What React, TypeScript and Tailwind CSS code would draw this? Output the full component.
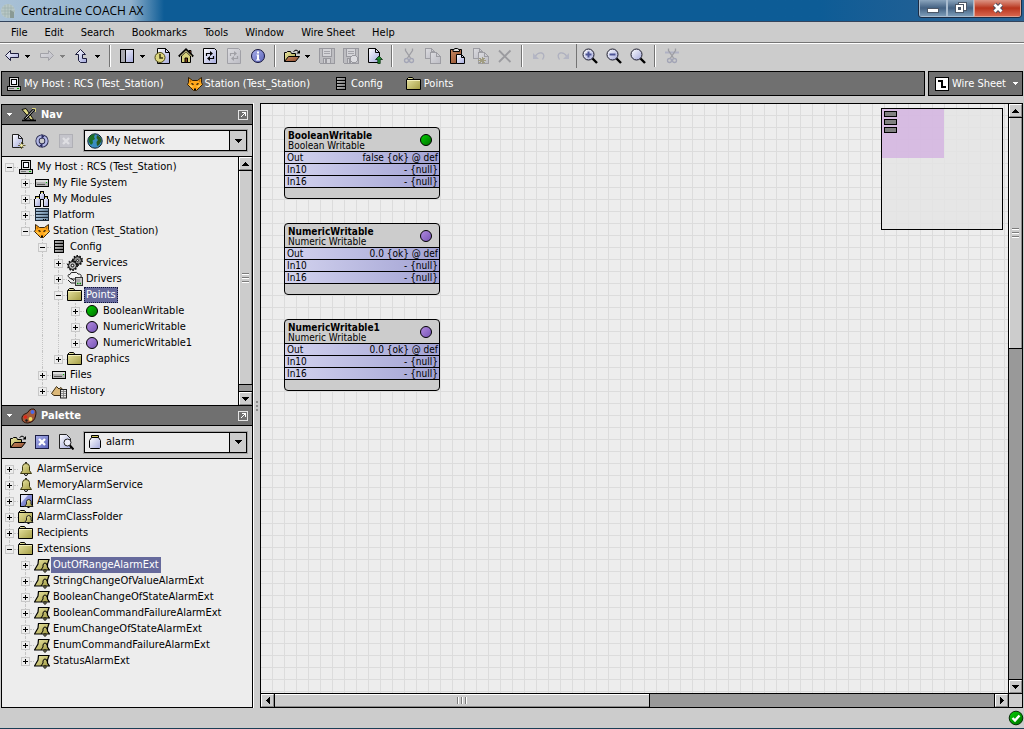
import { useState, type ReactNode } from "react";
import clsx from "clsx";

/* ---------- icons ---------- */

function Svg({ children, w = 16, h = 16, soft = false }: { children: ReactNode; w?: number; h?: number; soft?: boolean }) {
  return (
    <svg
      width={w}
      height={h}
      viewBox={`0 0 ${w} ${h}`}
      fill="none"
      shapeRendering={soft ? "auto" : "crispEdges"}
      className="block shrink-0"
      aria-hidden="true"
    >
      {children}
    </svg>
  );
}

function Gradients() {
  const list = [
    ["lav", "#ffffff", "#a4a9dc"],
    ["folder", "#ece8a8", "#a39c42"],
    ["wood", "#c98a62", "#8a4a2c"],
    ["rack", "#c4c4c4", "#6a6a6a"],
    ["blueSteel", "#c4dcf0", "#4d6b86"],
    ["off", "#dcdce0", "#bcbcc4"],
    ["blue", "#a9b0ea", "#5a62b8"],
    ["green", "#00d400", "#006c00"],
    ["purple", "#b38be0", "#7453b4"],
  ];
  return (
    <svg className="absolute size-0" aria-hidden="true">
      <defs>
        {list.map(([id, a, b]) => (
          <linearGradient key={id} id={id} x1="0" y1="0" x2="1" y2="1">
            <stop offset="0" stopColor={a} />
            <stop offset="1" stopColor={b} />
          </linearGradient>
        ))}
      </defs>
    </svg>
  );
}

const BackIcon = () => (
  <Svg soft>
    <path d="M1.500 7.500L6.500 2.500V5.500H14.500V9.500H6.500V12.500Z" fill="url(#lav)" stroke="#1c1c3c" />
  </Svg>
);
const ForwardIcon = () => (
  <Svg soft>
    <path d="M14.500 7.500L9.500 2.500V5.500H1.500V9.500H9.500V12.500Z" fill="url(#off)" stroke="#a2a2a8" />
  </Svg>
);
const UpIcon = () => (
  <Svg soft>
    <path d="M6.500 1.500L11.500 6.500H8.500V10.500H12.500V14.500H6.500L4.500 12.500V6.500H1.500Z" fill="url(#lav)" stroke="#1c1c3c" />
  </Svg>
);
const PanelIcon = () => (
  <Svg>
    <path d="M1.500 1.500H14.500V14.500H1.500Z" fill="url(#lav)" stroke="#000" />
    <path d="M2 2H6V14H2Z" fill="#a9a9b0" />
    <path d="M6.500 2V14" stroke="#000" />
  </Svg>
);
const HistoryClockIcon = () => (
  <Svg soft>
    <path d="M3.500 .5H11.500L15.500 4.500V15.500H3.500Z" fill="url(#lav)" stroke="#000" />
    <path d="M11.500 .5V4.500H15.500" stroke="#000" />
    <circle cx="6" cy="9.500" r="5" fill="#dcd680" stroke="#4c4716" />
    <path d="M6 6V10H9" stroke="#3c3810" strokeWidth="1.500" />
  </Svg>
);
const HomeIcon = () => (
  <Svg soft>
    <path d="M11 2.500H13V6H11Z" fill="#b05030" stroke="#000" />
    <path d="M3.500 8V14.500H12.500V8L8 3.500Z" fill="#d8d27c" stroke="#000" />
    <path d="M.8 8.500L8 1.500L15.200 8.500" stroke="#000" strokeWidth="2" />
    <path d="M2 8.500L8 2.800L14 8.500" stroke="#e4df98" strokeWidth=".9" />
    <path d="M7 10H9.500V14.500H7Z" fill="#7a3f1e" stroke="#000" />
  </Svg>
);
const RefreshIcon = ({ off = false }: { off?: boolean }) => {
  const ink = off ? "#a0a0a6" : "#000";
  return (
    <Svg soft>
      <path d="M1.500 .5H12.500L14.500 2.500V15.500H1.500Z" fill={off ? "url(#off)" : "url(#lav)"} stroke={ink} />
      <path d="M4.500 8V5.500H8.500M11.500 8V10.500H7.500" stroke={ink} strokeWidth="1.200" />
      <path d="M8 3L11 5.500L8 8ZM8 8L5 10.500L8 13Z" fill={ink} />
    </Svg>
  );
};
const InfoIcon = () => (
  <Svg soft>
    <circle cx="8" cy="8" r="6.500" fill="url(#blue)" stroke="#14143c" />
    <path d="M7 3.500H9V5.500H7ZM6.500 6.500H9V11.500H10V12.500H6V11.500H7V7.500H6.500Z" fill="#fff" />
  </Svg>
);
const OpenIcon = () => (
  <Svg w={17} soft>
    <path d="M.5 13.500V4.500H2.500L3.500 3.500H6.500L7.500 5.500H11.500V8" fill="url(#folder)" stroke="#000" />
    <path d="M.5 13.500L4.500 8.500H15.500L11.500 13.500Z" fill="url(#wood)" stroke="#000" />
    <path d="M9.500 3.500Q12 .5 14.500 3.500" stroke="#000" />
    <path d="M16 2V5.500H12.500Z" fill="#000" />
  </Svg>
);
const SaveIcon = ({ mark = false }: { mark?: boolean }) => (
  <Svg>
    <path d="M.5 .5H15.500V15.500H1.500L.5 14.500Z" fill="#bdbdc1" stroke="#99999f" />
    <path d="M3.500 1V8.500H12.500V1" fill="#d4d4d8" stroke="#99999f" />
    <path d="M5 3.500H11M5 5.500H11" stroke="#a4a4aa" />
    <path d="M4.500 15V10.500H11.500V15" fill="#d0d0d4" stroke="#99999f" />
    <path d="M6 11H8V15H6Z" fill="#99999f" />
    {mark && <circle cx="11" cy="11" r="3.500" fill="#dcdce0" stroke="#99999f" />}
  </Svg>
);
const ExportIcon = () => (
  <Svg soft>
    <path d="M1.500 .5H8.500L12.500 4.500V14.500H1.500Z" fill="url(#lav)" stroke="#000" />
    <path d="M8.500 .5V4.500H12.500" stroke="#000" />
    <path d="M12 8L15.500 11.500H13.200V15.500H10.800V11.500H8.500Z" fill="#1c8a2c" stroke="#062c0c" strokeWidth=".8" />
  </Svg>
);
const CutIcon = ({ bar = false }: { bar?: boolean }) => (
  <Svg soft>
    {bar && <path d="M1 4.500H15" stroke="#b0b2c4" strokeWidth="2" />}
    <path d="M4.500 .5V2.500L9.500 10M11.500 .5V2.500L6.500 10" stroke="#9d9da3" strokeWidth="1.300" />
    <circle cx="5.500" cy="12.500" r="2" stroke="#a3a5b6" strokeWidth="1.300" />
    <circle cx="10.500" cy="12.500" r="2" stroke="#a3a5b6" strokeWidth="1.300" />
  </Svg>
);
const CopyIcon = ({ mark = false }: { mark?: boolean }) => (
  <Svg>
    <path d="M.5 .5H6.500L9.500 3.500V10.500H.5Z" fill="url(#off)" stroke="#9d9da3" />
    <path d="M6.500 .5V3.500H9.500" stroke="#9d9da3" />
    <path d="M5.500 4.500H11.500L15.500 8.500V15.500H5.500Z" fill="url(#off)" stroke="#9d9da3" />
    <path d="M11.500 4.500V8.500H15.500" stroke="#9d9da3" />
    {mark && <path d="M5 12.500H13M9 8.500V16M6.500 10L11.500 15M11.500 10L6.500 15" stroke="#a09c80" />}
  </Svg>
);
const PasteIcon = () => (
  <Svg soft>
    <path d="M1.500 1.500H12.500V15.500H1.500Z" fill="url(#wood)" stroke="#000" />
    <path d="M4 3.500H10.500V2L8.500 .5H6L4 2Z" fill="#dedede" stroke="#000" />
    <path d="M7.500 6.500H12.500L15.500 9.500V15.500H7.500Z" fill="url(#lav)" stroke="#000" />
    <path d="M12.500 6.500V9.500H15.500" stroke="#000" />
  </Svg>
);
const DeleteIcon = () => (
  <Svg soft>
    <path d="M2 2.500L13.500 14M13.500 2.500L2 14" stroke="#9b9b9f" strokeWidth="1.800" />
  </Svg>
);
const UndoIcon = ({ redo = false }: { redo?: boolean }) => (
  <Svg soft>
    <g transform={redo ? "matrix(-1 0 0 1 16 0)" : undefined}>
      <path d="M4 8.500Q7 4 11 5Q14.500 7 11.500 11.500" stroke="#aeb0bf" strokeWidth="1.300" />
      <path d="M2 5V11H8Z" fill="#b4b6c4" />
    </g>
  </Svg>
);
const ZoomIcon = ({ sign }: { sign?: "+" | "-" }) => (
  <Svg soft>
    <path d="M10 10L15 15" stroke="#000" strokeWidth="2.400" />
    <circle cx="6.500" cy="6.500" r="5.500" fill="url(#lav)" stroke="#1c1c2c" />
    {sign && <path d="M3.500 6.500H9.500" stroke="#4c5496" strokeWidth="2" />}
    {sign === "+" && <path d="M6.500 3.500V9.500" stroke="#4c5496" strokeWidth="2" />}
  </Svg>
);

const HostIcon = () => (
  <Svg>
    <path d="M3.500 1.500H12.500V10.500H3.500Z" fill="#e0e0e0" stroke="#000" />
    <path d="M5.500 3.500H10.500V8.500H5.500Z" fill="#f4f6ff" stroke="#000" />
    <path d="M1.500 10.500H14.500V14.500H1.500Z" fill="#c8c8c8" stroke="#000" />
    <path d="M3 12.500H8" stroke="#777" />
    <path d="M11 12H13V13H11Z" fill="#00b400" />
  </Svg>
);
const FoxIcon = () => (
  <Svg soft>
    <path
      d="M1.500 1.500L5.500 4.500H10.500L14.500 1.500V6.500L15.500 8.500L12.500 11.500L9.500 14.500H6.500L3.500 11.500L.5 8.500L1.500 6.500Z"
      fill="#ffa81c"
      stroke="#241400"
      strokeWidth=".9"
    />
    <path d="M2.500 3.500L4.500 5L3 6.500ZM13.500 3.500L11.500 5L13 6.500Z" fill="#c87000" />
    <path d="M4.500 7.500L6.500 8.500M11.500 7.500L9.500 8.500" stroke="#000" strokeWidth="1.200" />
    <path d="M2.500 9.500L5.500 10.500M13.500 9.500L10.500 10.500" stroke="#ffe070" />
    <path d="M7 12.500H9V14H7Z" fill="#000" />
  </Svg>
);
const RackIcon = ({ blue = false }: { blue?: boolean }) => (
  <Svg>
    {[1, 4, 7, 10].map((y) => (
      <rect
        key={y}
        x={blue ? 1.5 : 3.5}
        y={y + 0.5}
        width={blue ? 13 : 9}
        height="3"
        fill={blue ? "url(#blueSteel)" : "url(#rack)"}
        stroke={blue ? "#1c2a38" : "#000"}
      />
    ))}
    {blue && <path d="M9 12.500H10M11 12.500H12" stroke="#000" />}
  </Svg>
);
const FolderIcon = () => (
  <Svg soft>
    <path d="M.5 13.500V3.500L2.500 1.500H6.500L8 3.500H14.500V13.500Z" fill="url(#folder)" stroke="#000" />
    <path d="M1 4.500H14" stroke="#f4f0bc" />
    <path d="M1 3.500H8" stroke="#000" />
  </Svg>
);
const WireSheetIcon = () => (
  <Svg>
    <path d="M1.500 1.500H14.500V14.500H1.500Z" fill="#fff" stroke="#000" />
    <path d="M4 5H8V11H12" stroke="#000" strokeWidth="2" />
  </Svg>
);
const NavIcon = () => (
  <Svg soft>
    <path d="M1 2.500L5 1.500L12.500 12.500L10 13Z" fill="#e0da86" stroke="#000" strokeWidth=".9" />
    <path d="M13.500 2L3.500 12.500" stroke="#000" strokeWidth="2.600" />
    <path d="M13 2.500L4.500 11.500" stroke="#dadada" />
    <path d="M1 13.500H15" stroke="#000" strokeWidth="1.600" />
    <path d="M11 1.500H14.500V5" stroke="#d9d27a" />
  </Svg>
);
const DetachIcon = () => (
  <Svg w={12} h={12}>
    <path d="M1.500 1.500H10.500V10.500H1.500Z" stroke="#e4e4e4" />
    <path d="M3.500 8.500L8 4M5 3.500H8.500V7" stroke="#fff" />
  </Svg>
);
const NewDocIcon = () => (
  <Svg soft>
    <path d="M2.500 1.500H8.500L12.500 5.500V14.500H2.500Z" fill="url(#lav)" stroke="#222" />
    <path d="M8.500 1.500V5.500H12.500" stroke="#222" />
    <path d="M8 12.500H15.500M11.500 9V16M9.500 10.500L13.500 14.500M13.500 10.500L9.500 14.500" stroke="#5c5620" strokeWidth=".9" />
    <circle cx="11.500" cy="12.500" r="1.400" fill="#f4efb0" />
  </Svg>
);
const SyncRingIcon = () => (
  <Svg soft>
    <circle cx="8" cy="8" r="4.500" stroke="#2a2c50" strokeWidth="4.200" />
    <circle cx="8" cy="8" r="4.500" stroke="#b3b8e6" strokeWidth="2.400" />
    <path d="M7.500 1L10.500 3.500L7.500 6ZM8.500 15L5.500 12.500L8.500 10Z" fill="#2a2c60" />
  </Svg>
);
const CloseBoxIcon = ({ off = false }: { off?: boolean }) => (
  <Svg>
    <rect x="1.500" y="1.500" width="13" height="13" fill={off ? "#c4c4cb" : "url(#blue)"} stroke={off ? "#b0b0b6" : "#1a1c44"} />
    <path d="M5 5L11 11M11 5L5 11" stroke={off ? "#dedee2" : "#fff"} strokeWidth="2.400" shapeRendering="auto" />
  </Svg>
);
const GlobeIcon = () => (
  <Svg soft>
    <circle cx="8" cy="8" r="7.200" fill="#3b8dc0" stroke="#0c2434" />
    <path d="M3 3Q6 .8 8 1.500L7 4L8 6L5.500 7.500L6 10L4 12L2 9L1.500 6Z" fill="#1d6e24" />
    <path d="M10 2L13.500 4.500L14.500 8L12 12L10 13L9.500 9L11 7L9.500 5Z" fill="#2a5a1c" />
  </Svg>
);
const DriveIcon = () => (
  <Svg>
    <rect x="1.500" y="4.500" width="13" height="7" fill="#b4b4b4" stroke="#000" />
    <path d="M2 5H14V7H2Z" fill="#dcdcdc" />
    <path d="M3 9.500H11" stroke="#555" />
    <path d="M12 7H13V8H12Z" fill="#00c000" />
  </Svg>
);
const ModulesIcon = () => (
  <Svg>
    <path d="M5.500 3.500L6.500 2.500V.5H9.500V2.500L10.500 3.500V8H5.500Z" fill="url(#lav)" stroke="#000" />
    <path d="M.5 8.500L1.500 7.500V5.500H5.500V7.500L6.500 8.500V15.500H.5Z" fill="url(#lav)" stroke="#000" />
    <path d="M9.500 8.500L10.500 7.500V5.500H13.500V7.500L14.500 8.500V15.500H9.500Z" fill="url(#lav)" stroke="#000" />
    <path d="M2 6.500H5M11 6.500H13M7 1.500H9" stroke="#cfc45a" />
  </Svg>
);
const GearsIcon = () => (
  <Svg soft>
    <circle cx="10.500" cy="5.500" r="4" fill="#8c8c8c" stroke="#000" />
    <circle cx="10.500" cy="5.500" r="4.800" stroke="#000" strokeWidth="1.400" strokeDasharray="1.500 1.500" />
    <circle cx="5.500" cy="10.500" r="4" fill="#b4b4b4" stroke="#000" />
    <circle cx="5.500" cy="10.500" r="4.800" stroke="#000" strokeWidth="1.400" strokeDasharray="1.500 1.500" />
    <circle cx="5.500" cy="10.500" r="1.300" fill="#fff" stroke="#000" />
    <circle cx="10.500" cy="5.500" r="1" fill="#ddd" stroke="#000" strokeWidth=".7" />
  </Svg>
);
const DriversIcon = () => (
  <Svg soft>
    <path d="M2 6.500Q-.5 3.500 3 3.500Q3.500 .5 7 1.500Q10 .5 11 3Q15 3 14 6L12 8H4Z" fill="#f4f4f4" stroke="#222" />
    <path d="M1 9L4 12H8M4 7L7 10" stroke="#222" />
    <rect x="8.500" y="6.500" width="7" height="8" fill="#c8c8c8" stroke="#333" />
    <path d="M10 8V11M12 8V11" stroke="#888" />
    <path d="M10 12.500H11.500M12.500 12.500H14" stroke="#0a8a0a" strokeWidth="1.500" />
  </Svg>
);
const HistoryIcon = () => (
  <Svg soft>
    <path d="M.5 10.500L5.500 3.500L8 6L10 4.500L14.500 10.500V12.500H3Z" fill="#dcb878" stroke="#3a2a10" />
    <rect x="9.500" y="6.500" width="6" height="8.500" fill="#e4e4e4" stroke="#222" />
    <path d="M10 8.500H15M10 10.500H15M10 12.500H15M12.500 7V15" stroke="#777" strokeWidth=".8" />
  </Svg>
);
const Dot = ({ color }: { color: "green" | "purple" }) => (
  <Svg w={14} h={14} soft>
    <circle cx="7" cy="7" r="5.500" fill={color === "green" ? "url(#green)" : "url(#purple)"} stroke="#000" />
  </Svg>
);
const PaletteIcon = () => (
  <Svg soft>
    <path d="M1 11Q.5 7 5 5.500Q7 5 8 2.500Q10 .5 13 1Q16 3 14.500 8Q13.500 14 7 15Q1.500 15 1 11Z" fill="#a2583a" stroke="#2a1208" />
    <circle cx="11.500" cy="4" r="2" fill="#4a6ae8" />
    <circle cx="4.500" cy="9" r="1.800" fill="#e02818" />
    <circle cx="9.500" cy="11" r="1.900" fill="#f0dc60" />
    <circle cx="5.500" cy="12.500" r="1.200" fill="#1a1a1a" />
  </Svg>
);
const PreviewIcon = () => (
  <Svg soft>
    <path d="M1.500 .5H8.500L12.500 4.500V14.500H1.500Z" fill="url(#lav)" stroke="#222" />
    <circle cx="9.500" cy="8.500" r="3.500" fill="#eeeefa" stroke="#222" />
    <path d="M12 11.500L15.500 15.500" stroke="#000" strokeWidth="2" />
  </Svg>
);
const JarIcon = () => (
  <Svg soft>
    <path d="M4.500 1.500H11.500V3.500H4.500Z" fill="#cfc45a" stroke="#000" />
    <path d="M4.500 3.500H11.500L13.500 6.500V13.500L12.500 14.500H3.500L2.500 13.500V6.500Z" fill="url(#lav)" stroke="#000" />
  </Svg>
);
const BellIcon = () => (
  <Svg soft>
    <circle cx="8" cy="13" r="1.500" fill="#fff" stroke="#000" />
    <path d="M8 2.500V1" stroke="#333" strokeWidth="2" />
    <path
      d="M2.500 12.500L4.500 9.500V5.500Q4.800 2.500 8 2.500Q11.200 2.500 11.500 5.500V9.500L13.500 12.500Z"
      fill="url(#folder)"
      stroke="#3c3810"
    />
  </Svg>
);
const AlarmClassIcon = () => (
  <Svg soft>
    <rect x="2.500" y="1.500" width="12" height="12" fill="url(#blue)" stroke="#000" />
    <path d="M3 2H10L3 10Z" fill="#dfe2fa" />
    <path d="M6.500 13.500L8.500 11V8.500Q9 6.500 10.500 6.500Q12.500 6.500 13 8.500V11L15 13.500Z" fill="url(#folder)" stroke="#222" />
    <path d="M9.500 14.500H11.500" stroke="#000" />
  </Svg>
);
const AlarmFolderIcon = () => (
  <Svg soft>
    <path d="M.5 13.500V3.500L2.500 1.500H6.500L8 3.500H14.500V13.500Z" fill="url(#folder)" stroke="#000" />
    <path d="M1 3.500H8" stroke="#000" />
    <path d="M6.500 13.500L8.500 11V8.500Q9 6.500 10.500 6.500Q12.500 6.500 13 8.500V11L15 13.500Z" fill="url(#folder)" stroke="#222" />
    <path d="M9.500 14.500H11.500" stroke="#000" />
  </Svg>
);
const AlarmExtIcon = () => (
  <Svg soft>
    <path d="M4.500 2.500H15L13.500 7V10L15.500 13H.5L4 7Z" fill="url(#folder)" stroke="#000" strokeWidth="1.200" />
    <path d="M7 13L9 10V8Q9.500 6 11 6Q13 6 13 8.500" stroke="#000" />
    <circle cx="11" cy="14" r="1.200" fill="#e6e19a" stroke="#000" />
  </Svg>
);
const OkIcon = () => (
  <Svg soft>
    <circle cx="8" cy="8" r="6.800" fill="url(#green)" stroke="#042c04" />
    <path d="M4.500 8L7 10.500L11.500 5.500" stroke="#fff" strokeWidth="2.400" />
  </Svg>
);
const AppIcon = () => (
  <Svg soft>
    <circle cx="8" cy="8" r="7" fill="#b9c8c6" />
    <path d="M2 5H14M1 8H15M2 11H14M5 2V14M8 1V15M11 2V14" stroke="#9fb1ae" strokeWidth=".8" />
    <path d="M10 7V15H14V9Z" fill="#8a9a94" />
  </Svg>
);

const Caret = ({ color = "#000" }: { color?: string }) => (
  <Svg w={5} h={3}>
    <path d="M0 0H5V1H4V2H3V3H2V2H1V1H0Z" fill={color} />
  </Svg>
);

const arrows = {
  up: "M3 0H4V1H5V2H6V3H7V4H0V3H1V2H2V1H3Z",
  down: "M0 0H7V1H6V2H5V3H4V4H3V3H2V2H1V1H0Z",
  left: "M3 0H4V7H3V6H2V5H1V4H0V3H1V2H2V1H3Z",
  right: "M0 0H1V1H2V2H3V3H4V4H3V5H2V6H1V7H0Z",
};
const Arrow = ({ dir }: { dir: keyof typeof arrows }) => {
  const flat = dir === "up" || dir === "down";
  return (
    <Svg w={flat ? 7 : 4} h={flat ? 4 : 7}>
      <path d={arrows[dir]} fill="#000" />
    </Svg>
  );
};

/* ---------- small controls ---------- */

const Sep = () => (
  <span className="flex h-[22px] w-2.5 shrink-0 justify-center">
    <span className="w-px bg-[#747474]" />
    <span className="w-px bg-white" />
  </span>
);

function Tool({ label, children, off }: { label: string; children: ReactNode; off?: boolean }) {
  return (
    <button type="button" aria-label={label} disabled={off} className="flex size-6 shrink-0 items-center justify-center">
      {children}
    </button>
  );
}

function CaretButton({ label, off }: { label: string; off?: boolean }) {
  return (
    <button type="button" aria-label={label} disabled={off} className="flex h-6 w-[11px] shrink-0 items-center pl-px">
      <Caret color={off ? "#808080" : "#000"} />
    </button>
  );
}

function ScrollButton({ dir }: { dir: keyof typeof arrows }) {
  return (
    <button
      type="button"
      aria-label={`Scroll ${dir}`}
      className="flex size-[13px] shrink-0 items-center justify-center border border-t-white border-r-[#8a8a8a] border-b-[#8a8a8a] border-l-white bg-[#cccccc]"
    >
      <Arrow dir={dir} />
    </button>
  );
}

function Grip({ vertical }: { vertical?: boolean }) {
  return (
    <span className={clsx("flex gap-0.5", vertical ? "flex-col" : "flex-row")}>
      {[0, 1, 2].map((i) => (
        <span
          key={i}
          className={clsx("border-[#7c7c7c] bg-white", vertical ? "h-0.5 w-[7px] border-t" : "h-[7px] w-0.5 border-l")}
        />
      ))}
    </span>
  );
}

function VScroll({ thumb }: { thumb: string }) {
  return (
    <div className="flex w-3.5 shrink-0 flex-col border-l border-black bg-[#999999]">
      <ScrollButton dir="up" />
      <div className="flex min-h-0 flex-1 flex-col border-y border-black">
        <div
          className="flex items-center justify-center border-r border-l border-l-white border-r-[#8a8a8a] bg-[#cccccc]"
          style={{ height: thumb }}
        >
          <Grip vertical />
        </div>
        <div className="h-px bg-black" />
      </div>
      <ScrollButton dir="down" />
    </div>
  );
}

function Combo({ label, icon, options }: { label: string; icon: ReactNode; options: string[] }) {
  return (
    <label className="flex h-[21px] flex-1 items-stretch border border-black bg-[#ededed] outline outline-[#a4a4a4]">
      <span className="flex items-center pl-0.5">{icon}</span>
      <select aria-label={label} className="min-w-0 flex-1 appearance-none bg-transparent pl-[3px] outline-none">
        {options.map((o) => (
          <option key={o}>{o}</option>
        ))}
      </select>
      <span className="flex w-[17px] items-center justify-center border-l border-black bg-[#cccccc]">
        <Arrow dir="down" />
      </span>
    </label>
  );
}

/* ---------- tree ---------- */

interface TreeRow {
  level: number;
  label: string;
  icon: ReactNode;
  open?: boolean;
  // levels whose dotted guide passes through this row
  guides?: number[];
  // whether the guide continues above / below the expander
  above?: boolean;
  below?: boolean;
}

const GUIDE_WIDTH = ["w-4", "w-[17px]", "w-4", "w-[17px]"];

const navRows: TreeRow[] = [
  { level: 0, label: "My Host : RCS (Test_Station)", icon: <HostIcon />, open: true },
  { level: 1, label: "My File System", icon: <DriveIcon />, above: true, below: true },
  { level: 1, label: "My Modules", icon: <ModulesIcon />, above: true, below: true },
  { level: 1, label: "Platform", icon: <RackIcon blue />, above: true, below: true },
  { level: 1, label: "Station (Test_Station)", icon: <FoxIcon />, open: true, above: true },
  { level: 2, label: "Config", icon: <RackIcon />, open: true, above: true, below: true },
  { level: 3, label: "Services", icon: <GearsIcon />, guides: [2], above: true, below: true },
  { level: 3, label: "Drivers", icon: <DriversIcon />, guides: [2], above: true, below: true },
  { level: 3, label: "Points", icon: <FolderIcon />, open: true, guides: [2], above: true, below: true },
  { level: 4, label: "BooleanWritable", icon: <Dot color="green" />, guides: [2, 3], above: true, below: true },
  { level: 4, label: "NumericWritable", icon: <Dot color="purple" />, guides: [2, 3], above: true, below: true },
  { level: 4, label: "NumericWritable1", icon: <Dot color="purple" />, guides: [2, 3], above: true },
  { level: 3, label: "Graphics", icon: <FolderIcon />, guides: [2], above: true },
  { level: 2, label: "Files", icon: <DriveIcon />, above: true, below: true },
  { level: 2, label: "History", icon: <HistoryIcon />, above: true },
];

const paletteRows: TreeRow[] = [
  { level: 0, label: "AlarmService", icon: <BellIcon />, below: true },
  { level: 0, label: "MemoryAlarmService", icon: <BellIcon />, above: true, below: true },
  { level: 0, label: "AlarmClass", icon: <AlarmClassIcon />, above: true, below: true },
  { level: 0, label: "AlarmClassFolder", icon: <AlarmFolderIcon />, above: true, below: true },
  { level: 0, label: "Recipients", icon: <FolderIcon />, above: true, below: true },
  { level: 0, label: "Extensions", icon: <FolderIcon />, open: true, above: true },
  { level: 1, label: "OutOfRangeAlarmExt", icon: <AlarmExtIcon />, above: true, below: true },
  { level: 1, label: "StringChangeOfValueAlarmExt", icon: <AlarmExtIcon />, above: true, below: true },
  { level: 1, label: "BooleanChangeOfStateAlarmExt", icon: <AlarmExtIcon />, above: true, below: true },
  { level: 1, label: "BooleanCommandFailureAlarmExt", icon: <AlarmExtIcon />, above: true, below: true },
  { level: 1, label: "EnumChangeOfStateAlarmExt", icon: <AlarmExtIcon />, above: true, below: true },
  { level: 1, label: "EnumCommandFailureAlarmExt", icon: <AlarmExtIcon />, above: true, below: true },
  { level: 1, label: "StatusAlarmExt", icon: <AlarmExtIcon />, above: true },
];

const Dotted = ({ show }: { show?: boolean }) => (
  <span className={clsx("w-0 flex-1 border-l border-dotted", show ? "border-[#c4c4c4]" : "border-transparent")} />
);

function Tree({ rows, initial, focused }: { rows: TreeRow[]; initial: string; focused?: boolean }) {
  const [selected, setSelected] = useState(initial);
  return (
    <ul className="min-w-0 flex-1 overflow-hidden pt-0.5 pl-[3px]">
      {rows.map((row) => (
        <li key={row.label} className="flex h-4">
          {GUIDE_WIDTH.slice(0, row.level).map((w, level) => (
            <span key={level} className={clsx("flex shrink-0 flex-col pl-1", w)}>
              <Dotted show={row.guides?.includes(level)} />
            </span>
          ))}
          <span className="flex w-[9px] shrink-0 flex-col items-center">
            <Dotted show={row.above} />
            <button type="button" aria-label={`${row.open ? "Collapse" : "Expand"} ${row.label}`} className="block size-[9px]">
              <Svg w={9} h={9}>
                <path d="M.5 .5H8.500V8.500H.5Z" fill="#ededed" stroke="#c8c8c8" />
                <path d={row.open ? "M2 4.500H7" : "M2 4.500H7M4.500 2V7"} stroke="#000" />
              </Svg>
            </button>
            <Dotted show={row.below} />
          </span>
          <span className="flex w-1 shrink-0 items-center">
            <span className="w-full border-t border-dotted border-[#c4c4c4]" />
          </span>
          <span className="flex w-4 shrink-0 items-center justify-center">{row.icon}</span>
          <button
            type="button"
            onClick={() => setSelected(row.label)}
            className={clsx(
              "ml-px border border-dotted px-px leading-[14px] whitespace-nowrap",
              selected === row.label ? "bg-[#666a9c] text-white" : "border-transparent",
              selected === row.label && (focused ? "border-[#10143c]" : "border-[#666a9c]"),
            )}
          >
            {row.label}
          </button>
        </li>
      ))}
    </ul>
  );
}

function PanelHeader({ icon, title }: { icon: ReactNode; title: string }) {
  return (
    <header className="flex h-5 shrink-0 items-center border-b border-black bg-[#707070] pr-[3px] pl-[5px] text-white">
      <button type="button" aria-label={`${title} menu`} className="mr-[9px]">
        <Caret color="#fff" />
      </button>
      {icon}
      <h2 className="ml-1 flex-1 font-bold">{title}</h2>
      <button type="button" aria-label={`Detach ${title}`}>
        <DetachIcon />
      </button>
    </header>
  );
}

/* ---------- wire sheet ---------- */

interface Block {
  name: string;
  type: string;
  color: "green" | "purple";
  out: string;
  place: string;
}

const blocks: Block[] = [
  { name: "BooleanWritable", type: "Boolean Writable", color: "green", out: "false {ok} @ def", place: "left-[23px] top-[23px]" },
  { name: "NumericWritable", type: "Numeric Writable", color: "purple", out: "0.0 {ok} @ def", place: "left-[23px] top-[119px]" },
  { name: "NumericWritable1", type: "Numeric Writable", color: "purple", out: "0.0 {ok} @ def", place: "left-[23px] top-[215px]" },
];

function WireBlock({ block }: { block: Block }) {
  const slots = [
    ["Out", block.out],
    ["In10", "- {null}"],
    ["In16", "- {null}"],
  ];
  return (
    <article
      className={clsx("absolute w-[156px] overflow-hidden rounded-[4px] border border-black bg-[#cccccc] text-[10px]", block.place)}
    >
      <div className="flex h-6 items-center justify-between border-b border-black pr-1.5 pl-[3px]">
        <div className="pt-0.5 leading-[10px]">
          <h3 className="font-bold">{block.name}</h3>
          <p>{block.type}</p>
        </div>
        <Dot color={block.color} />
      </div>
      <dl>
        {slots.map(([slot, value]) => (
          <div
            key={slot}
            className="flex h-3 justify-between border-b border-black bg-linear-to-r from-[#d3d3ee] to-[#a3a3d4] pr-px pl-0.5 leading-3"
          >
            <dt>{slot}</dt>
            <dd>{value}</dd>
          </div>
        ))}
      </dl>
      <div className="h-2.5" />
    </article>
  );
}

function Overview() {
  return (
    <div className="absolute top-1 right-[5px] size-[122px] border border-black bg-[#e4e4e4]/85">
      <div className="flex h-[49px] w-[62px] flex-col gap-0.5 bg-[#d3b4e0]/85 pt-0.5 pl-0.5">
        {blocks.map((b) => (
          <span key={b.name} className="h-1.5 w-[13px] border border-black bg-[#808080]" />
        ))}
      </div>
    </div>
  );
}

/* ---------- app ---------- */

const menus = ["File", "Edit", "Search", "Bookmarks", "Tools", "Window", "Wire Sheet", "Help"];

const crumbs = [
  { label: "My Host : RCS (Test_Station)", icon: <HostIcon /> },
  { label: "Station (Test_Station)", icon: <FoxIcon /> },
  { label: "Config", icon: <RackIcon /> },
  { label: "Points", icon: <FolderIcon /> },
];

function TitleBar() {
  return (
    <div className="flex h-[22px] shrink-0 justify-between border-b border-[#34445c] bg-linear-to-r from-[#0d5c96] from-80% to-[#2b6394]">
      <div className="flex items-center gap-[5px] bg-linear-to-r from-[#a9c1d6] via-[#8fb0cc] via-80% to-transparent pr-5">
        <AppIcon />
        <h1 className="font-['Open_Sans','Noto_Sans',sans-serif] text-[12px] text-black">CentraLine COACH AX</h1>
      </div>
      <div className="mr-0.5 flex h-[18px] overflow-hidden rounded-b-[4px] border border-t-0 border-[#1c2c44]">
        <button
          type="button"
          aria-label="Minimize"
          className="flex w-7 items-center justify-center border border-t-0 border-[#a9bccf] bg-linear-to-b from-[#8ba5bd] via-[#446283] to-[#7c9cb8]"
        >
          <Svg w={12} h={12}>
            <rect x=".5" y="6.500" width="11" height="4" fill="#fff" stroke="#4c5868" />
          </Svg>
        </button>
        <button
          type="button"
          aria-label="Restore"
          className="flex w-[27px] items-center justify-center border border-t-0 border-[#a9bccf] bg-linear-to-b from-[#8ba5bd] via-[#446283] to-[#7c9cb8]"
        >
          <Svg w={12} h={12}>
            <path d="M3.500 .5H11.500V8.500H3.500Z" fill="#fff" stroke="#4c5868" />
            <path d="M.5 2.500H8.500V10.500H.5Z" fill="#fff" stroke="#4c5868" />
            <path d="M3.500 5.500H5.500V7.500H3.500Z" fill="#4c5868" stroke="#4c5868" />
          </Svg>
        </button>
        <button
          type="button"
          aria-label="Close"
          className="flex w-[47px] items-center justify-center border border-t-0 border-[#e0a090] bg-linear-to-b from-[#dc9484] via-[#b8341c] to-[#d8644c]"
        >
          <Svg w={12} h={12} soft>
            <path d="M2.500 2.500L9.500 9.500M9.500 2.500L2.500 9.500" stroke="#4c4c5c" strokeWidth="4.600" />
            <path d="M2.500 2.500L9.500 9.500M9.500 2.500L2.500 9.500" stroke="#fff" strokeWidth="2.800" />
          </Svg>
        </button>
      </div>
    </div>
  );
}

function Toolbar() {
  return (
    <div className="flex h-[27px] shrink-0 items-center pb-[3px]" role="toolbar">
      <Tool label="Back"><BackIcon /></Tool>
      <CaretButton label="Back history" />
      <Tool label="Forward" off><ForwardIcon /></Tool>
      <CaretButton label="Forward history" off />
      <Tool label="Up"><UpIcon /></Tool>
      <CaretButton label="Up levels" />
      <Sep />
      <Tool label="Side bars"><PanelIcon /></Tool>
      <CaretButton label="Choose side bar" />
      <Tool label="Recent"><HistoryClockIcon /></Tool>
      <Tool label="Home"><HomeIcon /></Tool>
      <Tool label="Refresh"><RefreshIcon /></Tool>
      <Tool label="Refresh all" off><RefreshIcon off /></Tool>
      <Tool label="Info"><InfoIcon /></Tool>
      <Sep />
      <Tool label="Open"><OpenIcon /></Tool>
      <CaretButton label="Open recent" />
      <Tool label="Save" off><SaveIcon /></Tool>
      <Tool label="Save bog" off><SaveIcon mark /></Tool>
      <Tool label="Export"><ExportIcon /></Tool>
      <Sep />
      <Tool label="Cut" off><CutIcon /></Tool>
      <Tool label="Copy" off><CopyIcon /></Tool>
      <Tool label="Paste"><PasteIcon /></Tool>
      <Tool label="Duplicate" off><CopyIcon mark /></Tool>
      <Tool label="Delete" off><DeleteIcon /></Tool>
      <Sep />
      <Tool label="Undo" off><UndoIcon /></Tool>
      <Tool label="Redo" off><UndoIcon redo /></Tool>
      <span className="mx-px h-6 w-px bg-[#747474]" />
      <Tool label="Zoom in"><ZoomIcon sign="+" /></Tool>
      <Tool label="Zoom out"><ZoomIcon sign="-" /></Tool>
      <Tool label="Reset zoom"><ZoomIcon /></Tool>
      <Sep />
      <Tool label="Delete links" off><CutIcon bar /></Tool>
    </div>
  );
}

export default function App() {
  return (
    <div className="flex h-screen flex-col overflow-hidden border-b border-[#1c3f56] bg-[#cccccc] font-['DejaVu_Sans_Condensed','DejaVu_Sans',sans-serif] text-[11px] leading-4 text-black">
      <Gradients />
      <TitleBar />

      <nav className="flex h-[21px] shrink-0 items-center gap-px border-b border-[#747474] pt-px pl-[3px]">
        {menus.map((m) => (
          <button key={m} type="button" className="px-2 whitespace-nowrap">
            {m}
          </button>
        ))}
      </nav>
      <div className="h-px shrink-0 bg-white" />
      <Toolbar />

      <div className="flex h-[25px] shrink-0 gap-[3px] px-px text-white">
        <div className="flex min-w-0 flex-1 items-center gap-[23px] overflow-hidden border border-black bg-[#707070] pl-1">
          {crumbs.map((c) => (
            <a key={c.label} href="#" className="flex items-center gap-0.5 whitespace-nowrap">
              {c.icon}
              {c.label}
            </a>
          ))}
        </div>
        <button type="button" className="flex items-center gap-0.5 border border-black bg-[#707070] pr-1 pl-[5px] whitespace-nowrap">
          <WireSheetIcon />
          <span className="mr-[5px]">Wire Sheet</span>
          <Caret color="#fff" />
        </button>
      </div>

      <main className="mt-[7px] flex min-h-0 flex-1 px-px">
        <aside className="mt-px flex w-[252px] shrink-0 flex-col border border-black bg-[#ededed]">
          <PanelHeader icon={<NavIcon />} title="Nav" />
          <div className="flex h-8 shrink-0 items-center border-b border-black bg-[#cccccc] pr-[5px] pl-1">
            <Tool label="New"><NewDocIcon /></Tool>
            <Tool label="Sync"><SyncRingIcon /></Tool>
            <Tool label="Close tree" off><CloseBoxIcon off /></Tool>
            <span className="w-1.5" />
            <Combo label="Nav tree" icon={<GlobeIcon />} options={["My Network"]} />
          </div>
          <section className="flex min-h-0 flex-1">
            <Tree rows={navRows} initial="Points" focused />
            <VScroll thumb="97%" />
          </section>

          <div className="h-px shrink-0 bg-black" />
          <PanelHeader icon={<PaletteIcon />} title="Palette" />
          <div className="flex h-[33px] shrink-0 items-center border-b border-black bg-[#cccccc] pr-[5px] pl-1">
            <Tool label="Open palette"><OpenIcon /></Tool>
            <Tool label="Close palette"><CloseBoxIcon /></Tool>
            <Tool label="Preview"><PreviewIcon /></Tool>
            <span className="w-1.5" />
            <Combo label="Palette" icon={<JarIcon />} options={["alarm"]} />
          </div>
          <section className="flex min-h-0 flex-1">
            <Tree rows={paletteRows} initial="OutOfRangeAlarmExt" />
          </section>
        </aside>

        <div className="flex w-[7px] shrink-0 items-center justify-center border-l border-white">
          <span className="flex flex-col gap-0.5">
            {[0, 1, 2].map((i) => (
              <span key={i} className="size-0.5 bg-[#8c8c8c]" />
            ))}
          </span>
        </div>

        <div className="flex min-w-0 flex-1 flex-col border border-black">
          <div className="flex min-h-0 flex-1">
            <div className="relative min-w-0 flex-1 overflow-hidden bg-[#ededed] bg-[linear-gradient(to_right,transparent_11px,#dcdcdc_11px),linear-gradient(to_bottom,transparent_11px,#dcdcdc_11px)] bg-size-[12px_12px]">
              {blocks.map((b) => (
                <WireBlock key={b.name} block={b} />
              ))}
              <Overview />
            </div>
            <VScroll thumb="41%" />
          </div>
          <div className="flex h-3.5 border-t border-black">
            <ScrollButton dir="left" />
            <div className="flex min-w-0 flex-1 border-x border-black bg-[#999999]">
              <div className="flex w-[52%] items-center justify-center border-y border-t-white border-b-[#8a8a8a] bg-[#cccccc]">
                <Grip />
              </div>
              <div className="w-px bg-black" />
            </div>
            <ScrollButton dir="right" />
            <div className="w-3.5 border-l border-black bg-[#cccccc]" />
          </div>
        </div>
      </main>

      <footer className="flex h-5 shrink-0 items-center justify-end">
        <OkIcon />
      </footer>
    </div>
  );
}
